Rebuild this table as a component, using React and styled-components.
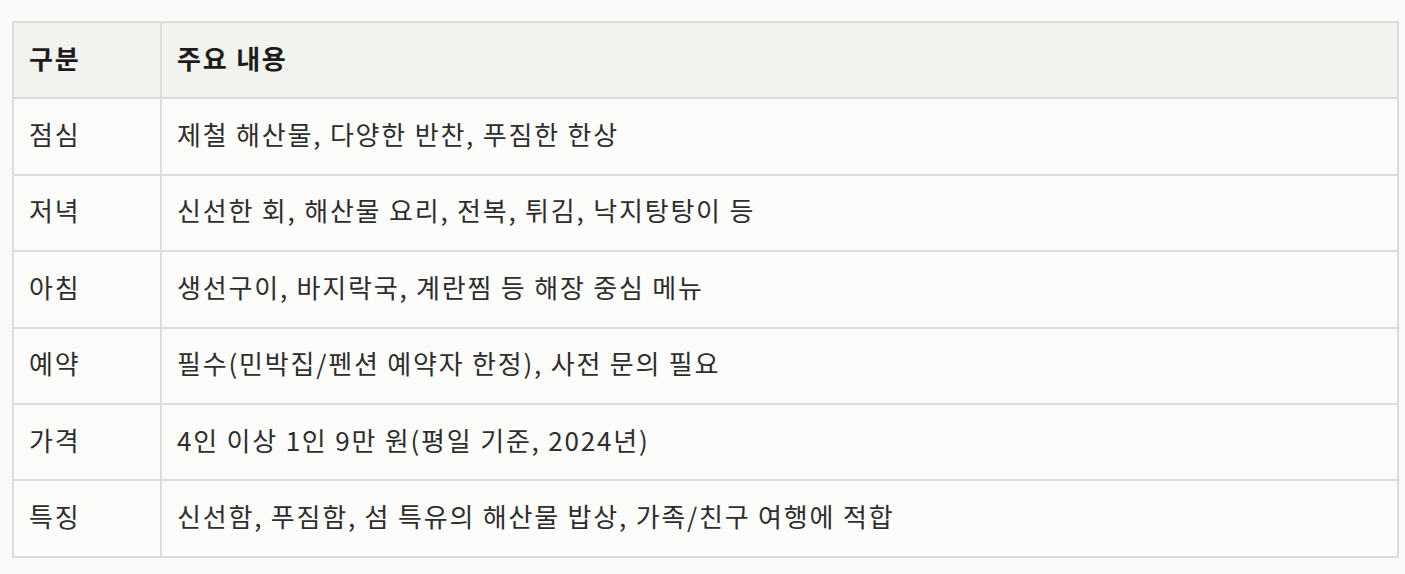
import React from "react";
import styled, { createGlobalStyle } from "styled-components";

const Global = createGlobalStyle`
  html, body { margin: 0; padding: 0; background: #fafaf8; }
  body { font-family: "Noto Sans CJK KR", "Noto Sans", sans-serif; }
`;

const Wrap = styled.div`
  padding: 21px 7px 0 12px;
`;

const Table = styled.table`
  width: 1387px;
  border-collapse: collapse;
  background: #fcfcfa;
  border: 2px solid #dcdcda;
`;

const Row = styled.tr`
  height: 76.4px;
`;

const Th = styled.th`
  background: #f2f2ef;
  color: #1c1c1c;
  font-weight: 700;
  font-size: 26px;
  letter-spacing: 1.8px;
  text-align: left;
  padding: 0 16px 6px 15px;
  border: 2px solid #dcdcda;
  width: ${(p) => p.$w || "auto"};
  box-sizing: border-box;
`;

const Td = styled.td`
  color: #2e2e2e;
  font-size: 26px;
  letter-spacing: 1.8px;
  font-weight: 400;
  padding: 0 16px 6px 15px;
  border: 2px solid #dcdcda;
  box-sizing: border-box;
`;

const rows = [
  ["점심", "제철 해산물, 다양한 반찬, 푸짐한 한상"],
  ["저녁", "신선한 회, 해산물 요리, 전복, 튀김, 낙지탕탕이 등"],
  ["아침", "생선구이, 바지락국, 계란찜 등 해장 중심 메뉴"],
  ["예약", "필수(민박집/펜션 예약자 한정), 사전 문의 필요"],
  ["가격", "4인 이상 1인 9만 원(평일 기준, 2024년)"],
  ["특징", "신선함, 푸짐함, 섬 특유의 해산물 밥상, 가족/친구 여행에 적합"],
];

export default function App() {
  return (
    <>
      <Global />
      <Wrap>
        <Table>
          <thead>
            <Row>
              <Th $w="148px">구분</Th>
              <Th>주요 내용</Th>
            </Row>
          </thead>
          <tbody>
            {rows.map(([k, v]) => (
              <Row key={k}>
                <Td>{k}</Td>
                <Td>{v}</Td>
              </Row>
            ))}
          </tbody>
        </Table>
      </Wrap>
    </>
  );
}
